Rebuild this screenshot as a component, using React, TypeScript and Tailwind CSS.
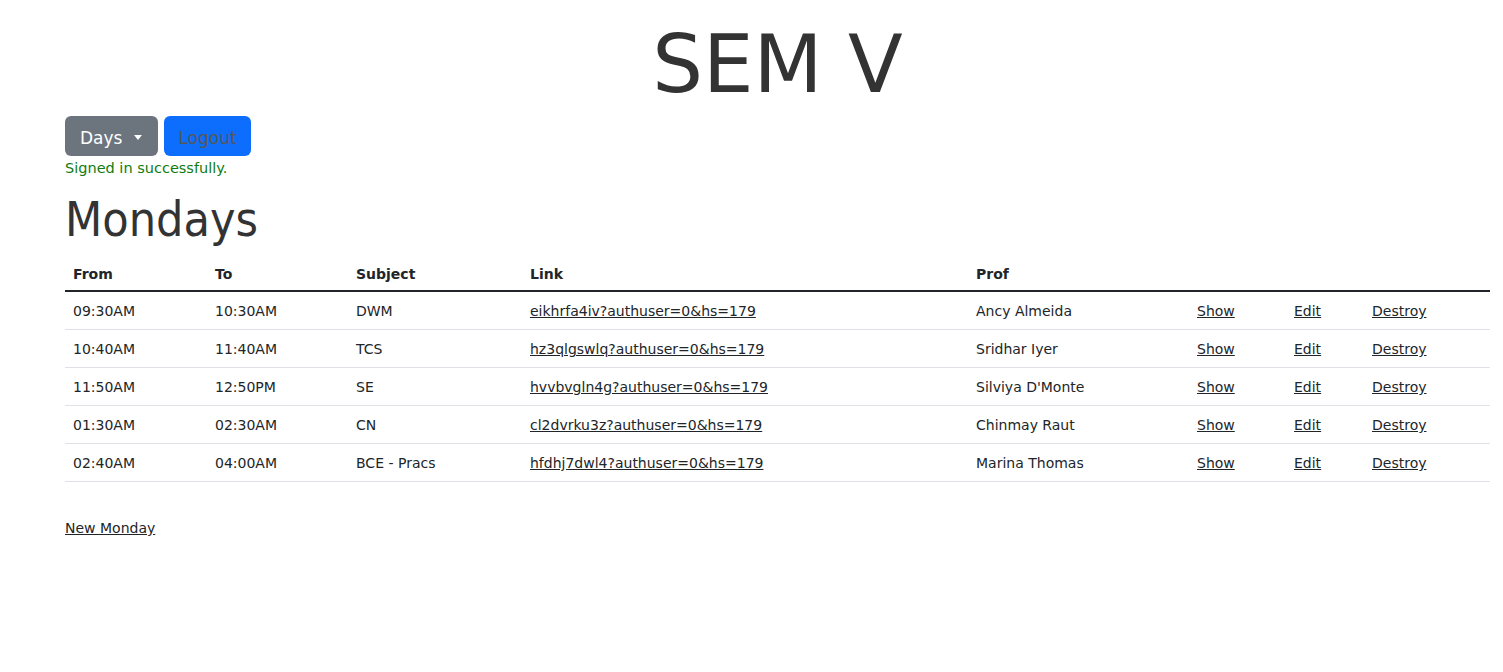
import React from "react";

const rows = [
  { from: "09:30AM", to: "10:30AM", subject: "DWM", link: "eikhrfa4iv?authuser=0&hs=179", prof: "Ancy Almeida" },
  { from: "10:40AM", to: "11:40AM", subject: "TCS", link: "hz3qlgswlq?authuser=0&hs=179", prof: "Sridhar Iyer" },
  { from: "11:50AM", to: "12:50PM", subject: "SE", link: "hvvbvgln4g?authuser=0&hs=179", prof: "Silviya D'Monte" },
  { from: "01:30AM", to: "02:30AM", subject: "CN", link: "cl2dvrku3z?authuser=0&hs=179", prof: "Chinmay Raut" },
  { from: "02:40AM", to: "04:00AM", subject: "BCE - Pracs", link: "hfdhj7dwl4?authuser=0&hs=179", prof: "Marina Thomas" },
];

export default function App() {
  return (
    <div
      className="min-h-[672px] bg-white pl-[65px] pr-[13px] text-[#212529]"
      style={{ fontFamily: '"DejaVu Sans", Verdana, sans-serif' }}
    >
      <h1 className="pt-[18px] text-center text-[80px] leading-[93px] font-normal text-[#333333]">SEM V</h1>

      <div className="mt-[5px] flex gap-[6px]">
        <button className="flex h-[40px] items-center rounded-[6px] bg-[#6c757d] pl-[15px] pr-[16px] pt-[5px] text-[17px] text-white">
          Days
          <span className="ml-[12px] mt-[-3px] h-0 w-0 border-x-[4px] border-t-[5px] border-x-transparent border-t-white" />
        </button>
        <button className="flex h-[40px] items-center rounded-[6px] bg-[#0d6efd] px-[14px] pt-[5px] text-[17px] text-[#575757]">
          Logout
        </button>
      </div>

      <p className="pt-[2px] text-[14.5px] leading-[21px] text-[#107c10]">Signed in successfully.</p>

      <h2
        className="mt-[12px] mb-[6px] text-[48px] leading-[57px] font-normal text-[#333333]"
        style={{ fontFamily: '"DejaVu Sans Condensed", "DejaVu Sans", sans-serif' }}
      >
        Mondays
      </h2>

      <table className="w-full table-fixed border-collapse text-left text-[14px] leading-[21px]">
        <colgroup>
          <col className="w-[142px]" />
          <col className="w-[141px]" />
          <col className="w-[174px]" />
          <col className="w-[446px]" />
          <col className="w-[221px]" />
          <col className="w-[97px]" />
          <col className="w-[78px]" />
          <col className="w-[126px]" />
        </colgroup>
        <thead>
          <tr className="border-b-2 border-[#212529]">
            <th className="px-2 pt-[10px] pb-[5px] font-bold">From</th>
            <th className="px-2 pt-[10px] pb-[5px] font-bold">To</th>
            <th className="px-2 pt-[10px] pb-[5px] font-bold">Subject</th>
            <th className="px-2 pt-[10px] pb-[5px] font-bold">Link</th>
            <th className="px-2 pt-[10px] pb-[5px] font-bold">Prof</th>
            <th className="px-2 pt-[10px] pb-[5px]" />
            <th className="px-2 pt-[10px] pb-[5px]" />
            <th className="px-2 pt-[10px] pb-[5px]" />
          </tr>
        </thead>
        <tbody>
          {rows.map((r) => (
            <tr key={r.from} className="border-b border-[#dee2e6]">
              <td className="px-2 pt-[9px] pb-[7px]">{r.from}</td>
              <td className="px-2 pt-[9px] pb-[7px]">{r.to}</td>
              <td className="px-2 pt-[9px] pb-[7px]">{r.subject}</td>
              <td className="px-2 pt-[9px] pb-[7px]">
                <a href="#" className="text-[#212529] underline">{r.link}</a>
              </td>
              <td className="px-2 pt-[9px] pb-[7px]">{r.prof}</td>
              <td className="px-2 pt-[9px] pb-[7px]">
                <a href="#" className="text-[#212529] underline">Show</a>
              </td>
              <td className="px-2 pt-[9px] pb-[7px]">
                <a href="#" className="text-[#212529] underline">Edit</a>
              </td>
              <td className="px-2 pt-[9px] pb-[7px]">
                <a href="#" className="text-[#212529] underline">Destroy</a>
              </td>
            </tr>
          ))}
        </tbody>
      </table>

      <a href="#" className="mt-[36px] inline-block text-[14px] leading-[21px] text-[#212529] underline">
        New Monday
      </a>
    </div>
  );
}
